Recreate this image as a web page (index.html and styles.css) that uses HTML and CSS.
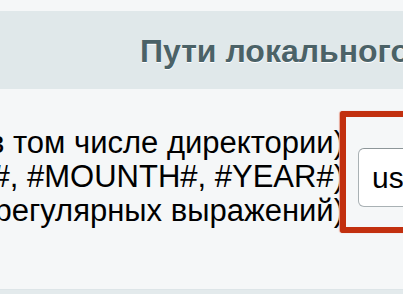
FILE: index.html
```html
<!DOCTYPE html>
<html>
<head>
  <title>Настройки</title>
  <link rel="stylesheet" href="styles.css">
</head>
<body>
  <div class="top-gap"></div>
  <div class="heading">
    <span class="heading-title">Пути локального</span>
  </div>

  <div class="field-row">
    <div class="field-label">
      <span>в том числе директории)</span>
      <span>#, #MOUNTH#, #YEAR#)</span>
      <span>регулярных выражений)</span>
    </div>
    <div class="field-value">
      <div class="highlight">
        <input type="text" class="text-input" value="us">
      </div>
    </div>
  </div>

  <div class="row-end"></div>
</body>
</html>
```

FILE: styles.css
```css
body {
  margin: 0;
  padding: 0;
  width: 403px;
  height: 294px;
  overflow: hidden;
  background: #f5f7f8;
  font-family: Arial, "Liberation Sans", sans-serif;
}

.top-gap {
  height: 11px;
}

.heading {
  height: 78px;
  background: #e0e8ea;
  display: flex;
  align-items: center;
  padding-left: 140px;
  white-space: nowrap;
  overflow: hidden;
}

.heading-title {
  font-size: 32px;
  font-weight: bold;
  color: #4b6267;
  text-shadow: 0 1px #fff;
  margin-top: 2px;
}

.field-row {
  height: 200px;
  display: flex;
  border-bottom: 1px solid #dde5e8;
}

.field-label {
  width: 340px;
  flex: none;
  padding-top: 37px;
  display: flex;
  flex-direction: column;
  align-items: flex-end;
  font-size: 31px;
  line-height: 34px;
  color: #000;
  white-space: nowrap;
}

.field-label span {
  margin-right: -4px;
}

.field-value {
  flex: 1;
  padding-top: 22px;
}

.highlight {
  border: 6px solid #c2300f;
  border-right: none;
  border-radius: 3px 0 0 3px;
  padding: 31px 0 20px 12px;
  box-shadow: -1px 0 1px #e6a595;
}

.text-input {
  display: block;
  box-sizing: border-box;
  width: 120px;
  height: 59px;
  margin: 0;
  padding: 0 0 0 13px;
  border: 1px solid #a9b1b4;
  border-top-color: #8d9699;
  border-radius: 6px;
  background: #fff;
  font-family: Arial, "Liberation Sans", sans-serif;
  font-size: 30px;
  color: #000;
}

.row-end {
  height: 4px;
  background: #e3eaec;
}
```
